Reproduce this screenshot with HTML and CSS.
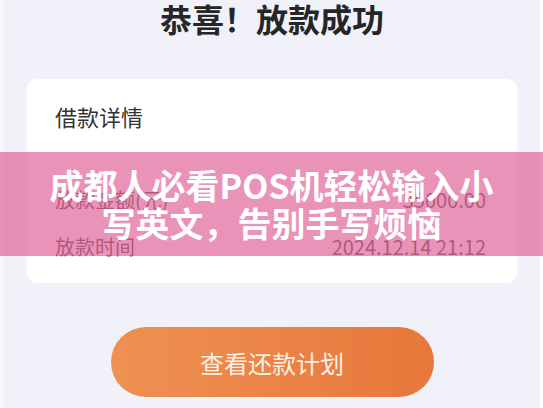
FILE: index.html
```html
<!DOCTYPE html>
<html lang="zh-CN">
<head>
    <meta charset="UTF-8">
    <meta name="viewport" content="width=device-width, initial-scale=1.0">
    <title>放款成功</title>
    <link rel="stylesheet" href="styles.css">
</head>
<body>
    <div class="screen">
        <h1 class="title">恭喜！放款成功</h1>

        <!-- 借款详情卡片 -->
        <div class="card">
            <h2 class="card-title">借款详情</h2>
            <div class="rows">
                <div class="row"><span>放款金额(元)</span><span>35000.00</span></div>
                <div class="row"><span>放款时间</span><span>2024.12.14 21:12</span></div>
            </div>
        </div>

        <button class="plan-btn">查看还款计划</button>
    </div>

    <!-- 标题横幅 -->
    <div class="banner">成都人必看POS机轻松输入小写英文，告别手写烦恼</div>
</body>
</html>
```

FILE: styles.css
```css
html, body {
    margin: 0;
    padding: 0;
}

body {
    width: 543px;
    height: 408px;
    overflow: hidden;
    background: linear-gradient(to right, #f8f8fc 0, #f8f8fc 4px, #f1f1fa 4px, #f1f1fa 540px, #fff 540px);
    font-family: "Noto Sans CJK SC", "Noto Sans", sans-serif;
    position: relative;
}

.screen {
    margin: 0 3px 0 4px;
    padding-top: 1px;
    display: flex;
    flex-direction: column;
    align-items: center;
}

.title {
    margin: 0;
    font-size: 32px;
    line-height: 35px;
    font-weight: 700;
    color: #262626;
}

.card {
    align-self: stretch;
    margin: 43px 23px 0;
    padding: 24px 31px 21px 28px;
    background: #fff;
    border-radius: 11px;
    height: 204px;
    box-sizing: border-box;
}

.card-title {
    margin: 0;
    font-size: 22px;
    line-height: 26px;
    font-weight: 400;
    color: #333;
}

.rows {
    margin-top: 56px;
    display: flex;
    flex-direction: column;
    gap: 17px;
}

.row {
    display: flex;
    justify-content: space-between;
    font-size: 20px;
    line-height: 30px;
    color: #5e5e5e;
}

.plan-btn {
    margin-top: 44px;
    width: 323px;
    height: 70px;
    border: none;
    border-radius: 35px;
    background: linear-gradient(to right, #ee9152, #e8773b);
    color: #fdf1e8;
    font-family: inherit;
    font-size: 24px;
}

.banner {
    position: absolute;
    left: 0;
    right: 0;
    top: 152px;
    height: 104px;
    box-sizing: border-box;
    padding: 14px 45px 0;
    background: rgba(222, 86, 145, 0.64);
    color: #fff;
    font-size: 34px;
    line-height: 38px;
    font-weight: 700;
    text-align: center;
}
```
